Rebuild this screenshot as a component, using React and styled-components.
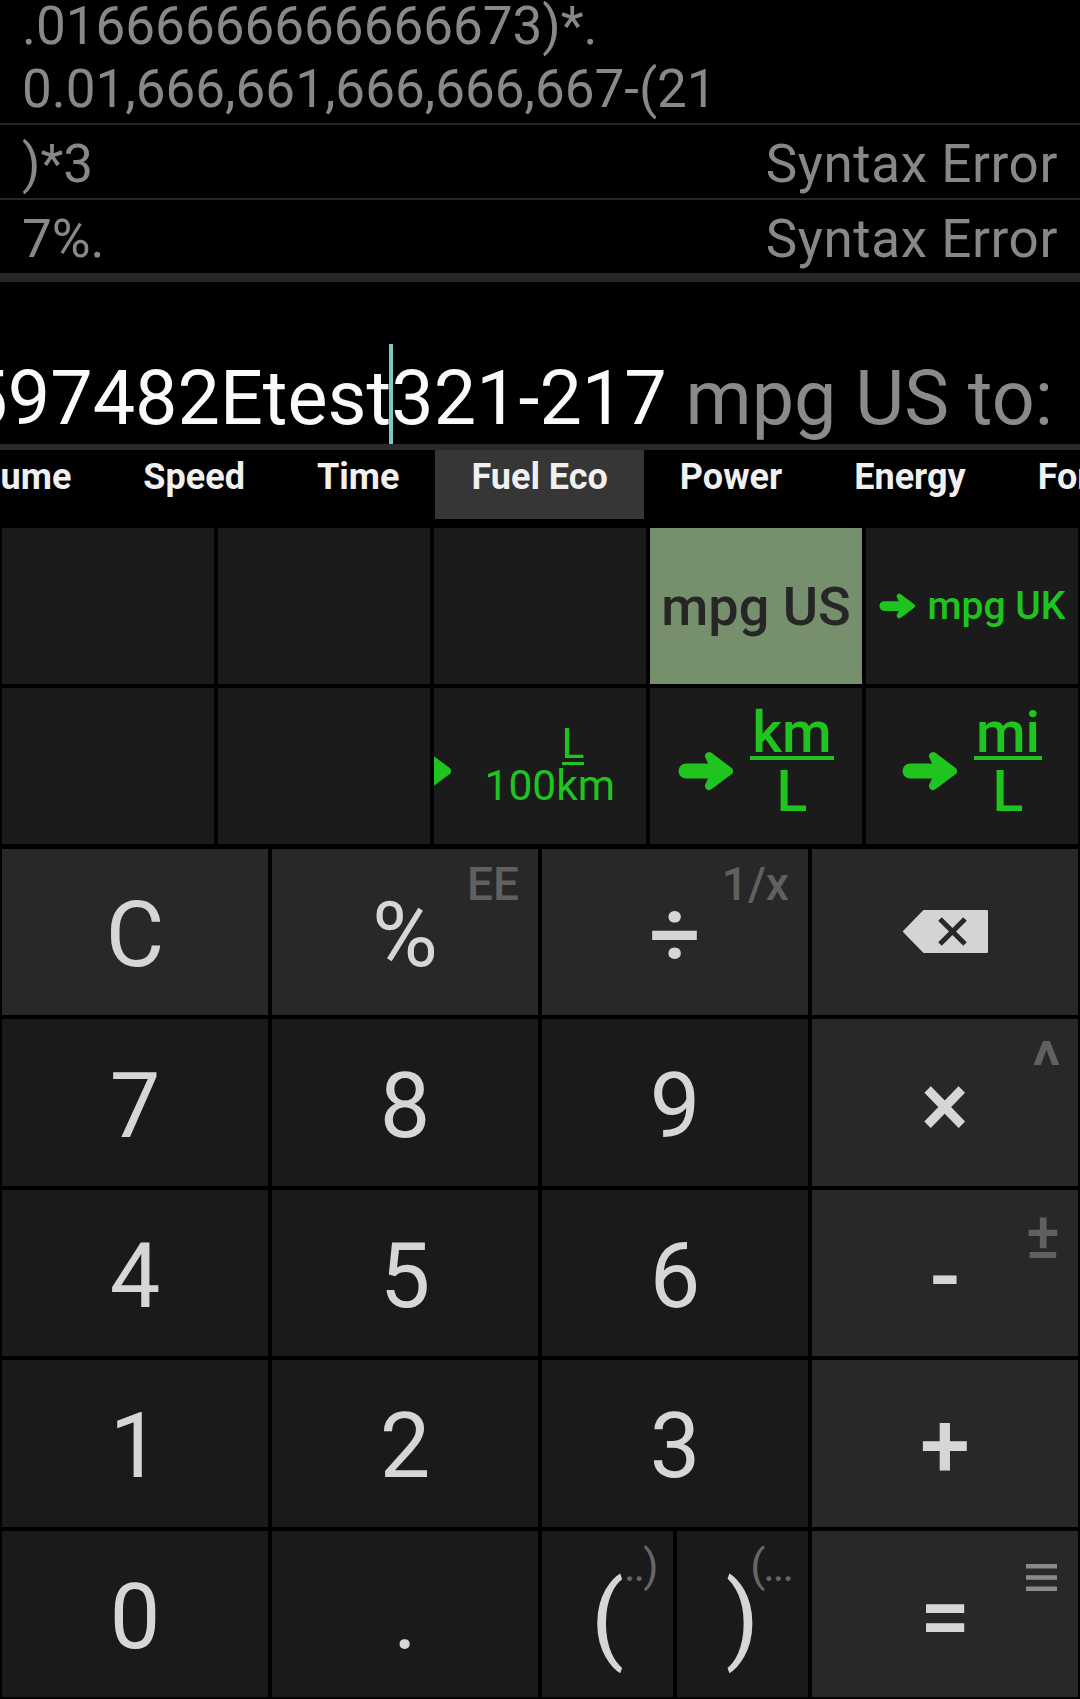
import React from 'react';
import styled, { createGlobalStyle } from 'styled-components';

const GREEN = '#1fc41f';

const GlobalStyle = createGlobalStyle`
  html, body { margin: 0; padding: 0; background: #000; }
  body { font-family: Roboto, "Noto Sans", "DejaVu Sans", sans-serif; }
  * { box-sizing: border-box; }
`;

const Screen = styled.div`
  width: 1080px;
  height: 1699px;
  background: #000;
  display: flex;
  flex-direction: column;
  overflow: hidden;
`;

/* ---------- history ---------- */
const History = styled.div`
  height: 273px;
  flex-shrink: 0;
  display: flex;
  flex-direction: column;
  justify-content: flex-end;
  overflow: hidden;
  font-size: 53px;
  color: #888888;
`;

const Entry = styled.div`
  flex-shrink: 0;
  display: flex;
  justify-content: space-between;
  align-items: flex-end;
  padding: 8px 22px 2px;
  line-height: 63px;
  white-space: nowrap;
  & + & {
    border-top: 2px solid #262626;
  }
`;

const Expr = styled.div``;
const Result = styled.div`
  letter-spacing: 0.6px;
`;

const ThickRule = styled.div`
  height: 9px;
  flex-shrink: 0;
  background: #262626;
`;

/* ---------- display ---------- */
const Display = styled.div`
  height: 168px;
  flex-shrink: 0;
  display: flex;
  flex-direction: column;
  justify-content: flex-end;
  padding-right: 27px;
  border-bottom: 6px solid #2a2a2a;
`;

const DisplayViewport = styled.div`
  display: flex;
  justify-content: flex-end;
  overflow: hidden;
`;

const DisplayText = styled.div`
  flex-shrink: 0;
  white-space: nowrap;
  font-size: 75.5px;
  line-height: 76px;
  color: #fafafa;
`;

const Cursor = styled.span`
  display: inline-block;
  width: 4px;
  height: 100px;
  margin: 0 -2px;
  vertical-align: -20px;
  background: #7ccbc2;
`;

const UnitHint = styled.span`
  color: #8a8a8a;
`;

/* ---------- tabs ---------- */
const TabBar = styled.div`
  height: 76px;
  flex-shrink: 0;
  overflow: hidden;
  display: flex;
  align-items: flex-start;
  background: #000;
`;

const TabStrip = styled.div`
  display: flex;
  margin-left: ${(p) => p.$offset}px;
`;

const Tab = styled.div`
  flex-shrink: 0;
  height: 69px;
  padding: 7px 36px 0;
  font-size: 36px;
  font-weight: 700;
  line-height: 41px;
  white-space: nowrap;
  color: #f0f0f0;
  background: ${(p) => (p.$active ? '#363636' : 'transparent')};
`;

/* ---------- converter ---------- */
const ConverterGrid = styled.div`
  height: 320px;
  flex-shrink: 0;
  display: grid;
  grid-template-columns: repeat(5, 1fr);
  grid-template-rows: repeat(2, 1fr);
  gap: 4px;
  padding: 2px;
`;

const UnitCell = styled.div`
  display: flex;
  align-items: center;
  justify-content: ${(p) => (p.$end ? 'flex-end' : 'center')};
  padding-right: ${(p) => (p.$end ? '31px' : '0')};
  overflow: hidden;
  background: ${(p) => (p.$selected ? '#768f6c' : '#1b1b1b')};
`;

const SelectedUnit = styled.span`
  font-size: 54px;
  font-weight: 500;
  color: #262626;
  white-space: nowrap;
`;

const ArrowRow = styled.div`
  display: flex;
  align-items: center;
  gap: ${(p) => p.$gap}px;
  flex-shrink: 0;
`;

const UnitText = styled.span`
  font-size: 39px;
  font-weight: 500;
  color: ${GREEN};
  white-space: nowrap;
`;

const ArrowSvg = styled.svg`
  display: block;
  flex-shrink: 0;
  margin-top: ${(p) => p.$shift || 0}px;
`;

const Fraction = styled.div`
  display: flex;
  flex-direction: column;
  align-items: ${(p) => (p.$small ? 'flex-start' : 'center')};
  color: ${GREEN};
  font-size: ${(p) => (p.$small ? 42.5 : 57)}px;
  font-weight: ${(p) => (p.$small ? 400 : 500)};
  white-space: nowrap;
`;

const Numerator = styled.div`
  line-height: ${(p) => (p.$small ? 36 : 47)}px;
  padding: 0 ${(p) => (p.$small ? 0 : 2)}px;
  margin-left: ${(p) => p.$indent || 0}px;
  border-bottom: ${(p) => (p.$small ? 3 : 4)}px solid ${GREEN};
`;

const Denominator = styled.div`
  line-height: ${(p) => (p.$small ? 42 : 63)}px;
`;

/* ---------- keypad ---------- */
const Keypad = styled.div`
  flex: 1;
  display: grid;
  grid-template-columns: repeat(4, 1fr);
  grid-template-rows: repeat(5, 1fr);
  gap: 4px;
  padding: 3px 2px 2px;
`;

const Key = styled.div`
  position: relative;
  display: flex;
  align-items: center;
  justify-content: center;
  padding-top: 8px;
  background: ${(p) => (p.$fn ? '#282828' : '#1a1a1a')};
  color: #d6d6d6;
  font-size: 90px;
  line-height: 90px;
`;

const KeyPair = styled.div`
  display: grid;
  grid-template-columns: 1fr 1fr;
  gap: 4px;
`;

const Glyph = styled.span`
  position: relative;
  display: inline-block;
  font-size: ${(p) => p.$size || 90}px;
  line-height: ${(p) => p.$size || 90}px;
  font-weight: ${(p) => (p.$bold ? 500 : 400)};
`;

const Badge = styled.span`
  position: absolute;
  top: ${(p) => p.$top}px;
  right: ${(p) => p.$right}px;
  font-size: ${(p) => p.$size}px;
  line-height: ${(p) => p.$size}px;
  font-weight: ${(p) => p.$weight || 500};
  color: #606060;
`;

const BadgeIcon = styled.svg`
  position: absolute;
  top: ${(p) => p.$top}px;
  right: ${(p) => p.$right}px;
`;

const ParenHint = styled.span`
  position: absolute;
  left: 100%;
  top: -26px;
  margin-left: ${(p) => p.$nudge || 0}px;
  font-size: 44px;
  line-height: 44px;
  font-weight: 400;
  letter-spacing: -2px;
  color: #666666;
  white-space: nowrap;
`;

const BackspaceSvg = styled.svg`
  display: block;
  margin-top: -10px;
`;

const Arrow = ({ w = 55, h = 40, shift }) => (
  <ArrowSvg width={w} height={h} viewBox="0 0 55 40" $shift={shift}>
    <line x1="8" y1="20" x2="38" y2="20" stroke={GREEN} strokeWidth="15" strokeLinecap="round" />
    <polygon
      points="31,5 51,20 31,35 38,20"
      fill={GREEN}
      stroke={GREEN}
      strokeWidth="8"
      strokeLinejoin="round"
    />
  </ArrowSvg>
);

const BackspaceIcon = () => (
  <BackspaceSvg width="85" height="43" viewBox="0 0 85 43">
    <path d="M21 1 H84 V42 H21 L1 21.5 Z" fill="#d4d4d4" stroke="#d4d4d4" strokeWidth="2" strokeLinejoin="round" />
    <path d="M37 9 L62 34 M62 9 L37 34" stroke="#282828" strokeWidth="5" />
  </BackspaceSvg>
);

const tabs = ['Volume', 'Speed', 'Time', 'Fuel Eco', 'Power', 'Energy', 'Force'];

export default function App() {
  return (
    <>
      <GlobalStyle />
      <Screen>
        <History>
          <Entry>
            <Expr>
              .01666666666666673)*.
              <br />
              0.01,666,661,666,666,667-(21
            </Expr>
          </Entry>
          <Entry>
            <Expr>)*3</Expr>
            <Result>Syntax Error</Result>
          </Entry>
          <Entry>
            <Expr>7%.</Expr>
            <Result>Syntax Error</Result>
          </Entry>
        </History>
        <ThickRule />

        <Display>
          <DisplayViewport>
            <DisplayText>
              597482Etest
              <Cursor />
              321-217 <UnitHint>mpg US to:</UnitHint>
            </DisplayText>
          </DisplayViewport>
        </Display>

        <TabBar>
          <TabStrip $offset={-88}>
            {tabs.map((t) => (
              <Tab key={t} $active={t === 'Fuel Eco'}>
                {t}
              </Tab>
            ))}
          </TabStrip>
        </TabBar>

        <ConverterGrid>
          <UnitCell />
          <UnitCell />
          <UnitCell />
          <UnitCell $selected>
            <SelectedUnit>mpg US</SelectedUnit>
          </UnitCell>
          <UnitCell>
            <ArrowRow $gap={13}>
              <Arrow w={36} h={26} />
              <UnitText>mpg UK</UnitText>
            </ArrowRow>
          </UnitCell>

          <UnitCell />
          <UnitCell />
          <UnitCell $end>
            <ArrowRow $gap={34}>
              <Arrow shift={9} />
              <Fraction $small>
                <Numerator $small $indent={77}>L</Numerator>
                <Denominator $small>100km</Denominator>
              </Fraction>
            </ArrowRow>
          </UnitCell>
          <UnitCell>
            <ArrowRow $gap={17}>
              <Arrow shift={9} />
              <Fraction>
                <Numerator>km</Numerator>
                <Denominator>L</Denominator>
              </Fraction>
            </ArrowRow>
          </UnitCell>
          <UnitCell>
            <ArrowRow $gap={17}>
              <Arrow shift={9} />
              <Fraction>
                <Numerator>mi</Numerator>
                <Denominator>L</Denominator>
              </Fraction>
            </ArrowRow>
          </UnitCell>
        </ConverterGrid>

        <Keypad>
          <Key $fn><Glyph>C</Glyph></Key>
          <Key $fn>
            <Glyph>%</Glyph>
            <Badge $top={12} $right={19} $size={46}>EE</Badge>
          </Key>
          <Key $fn>
            <Glyph $bold>÷</Glyph>
            <Badge $top={12} $right={19} $size={46}>1/x</Badge>
          </Key>
          <Key $fn>
            <BackspaceIcon />
          </Key>

          <Key><Glyph>7</Glyph></Key>
          <Key><Glyph>8</Glyph></Key>
          <Key><Glyph>9</Glyph></Key>
          <Key $fn>
            <Glyph $bold>×</Glyph>
            <Badge $top={15} $right={17} $size={66} $weight={700}>^</Badge>
          </Key>

          <Key><Glyph>4</Glyph></Key>
          <Key><Glyph>5</Glyph></Key>
          <Key><Glyph>6</Glyph></Key>
          <Key $fn>
            <Glyph $bold>-</Glyph>
            <Badge $top={15} $right={18} $size={64} $weight={500}>±</Badge>
          </Key>

          <Key><Glyph>1</Glyph></Key>
          <Key><Glyph>2</Glyph></Key>
          <Key><Glyph>3</Glyph></Key>
          <Key $fn><Glyph $bold>+</Glyph></Key>

          <Key><Glyph>0</Glyph></Key>
          <Key><Glyph>.</Glyph></Key>
          <KeyPair>
            <Key>
              <Glyph $size={96}>
                (<ParenHint>..)</ParenHint>
              </Glyph>
            </Key>
            <Key>
              <Glyph $size={96}>
                )<ParenHint $nudge={-9}>(...</ParenHint>
              </Glyph>
            </Key>
          </KeyPair>
          <Key $fn>
            <Glyph $bold>=</Glyph>
            <BadgeIcon $top={33} $right={21} width="31" height="27" viewBox="0 0 31 27">
              <rect x="0" y="0" width="31" height="4.5" fill="#8a8a8a" />
              <rect x="0" y="11.25" width="31" height="4.5" fill="#8a8a8a" />
              <rect x="0" y="22.5" width="31" height="4.5" fill="#8a8a8a" />
            </BadgeIcon>
          </Key>
        </Keypad>
      </Screen>
    </>
  );
}
